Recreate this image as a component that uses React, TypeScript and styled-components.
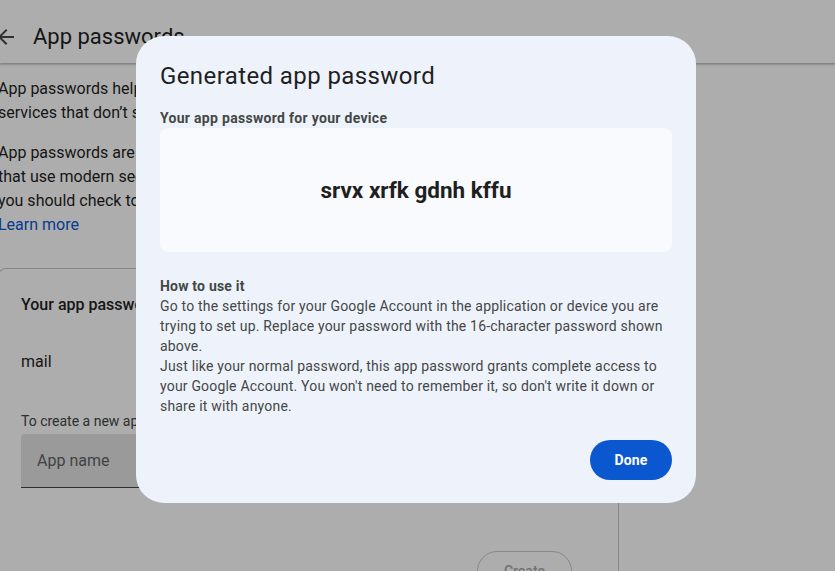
import React from "react";
import styled, { createGlobalStyle } from "styled-components";

const Global = createGlobalStyle`
  html, body { margin: 0; padding: 0; }
  body {
    width: 835px; height: 571px; overflow: hidden;
    background: #ffffff;
    font-family: Roboto, "Liberation Sans", Arial, sans-serif;
    color: #1f1f1f;
  }
`;

const Page = styled.div`
  width: 835px;
  height: 571px;
  display: flex;
  flex-direction: column;
  background: #fff;
  overflow: hidden;
`;

const Header = styled.header`
  height: 63px;
  display: flex;
  align-items: center;
  gap: 19px;
  box-shadow: 0 1px 2px rgba(60, 64, 67, 0.35), 0 1px 3px 1px rgba(60, 64, 67, 0.12);
  background: #fff;
  flex-shrink: 0;
  position: relative;
  z-index: 1;
  padding-top: 10px;
  box-sizing: border-box;
`;

const Title = styled.h1`
  margin: 0;
  font-size: 22px;
  font-weight: 400;
  color: #1f1f1f;
  line-height: 28px;
`;

const Content = styled.main`
  display: flex;
  flex-direction: column;
  flex: 1;
  margin-left: -2px;
  padding-top: 14px;
  width: 621px;
  min-height: 0;
`;

const Para = styled.p`
  margin: 0 0 16px 0;
  font-size: 16px;
  line-height: 24px;
  color: #1f1f1f;
  white-space: nowrap;
`;

const Link = styled.a`
  color: #0b57d0;
  text-decoration: none;
`;

const Card = styled.section`
  margin-top: 15px;
  border: 1px solid #c4c7c5;
  border-bottom: none;
  border-radius: 8px 8px 0 0;
  padding: 24px 20px 0 22px;
  flex: 1;
  min-height: 0;
  display: flex;
  flex-direction: column;
  overflow: hidden;
`;

const CardTitle = styled.div`
  font-size: 16px;
  line-height: 24px;
  font-weight: 500;
  color: #1f1f1f;
`;

const Mail = styled.div`
  font-size: 16px;
  line-height: 24px;
  margin-top: 33px;
`;

const Hint = styled.div`
  font-size: 14px;
  line-height: 20px;
  color: #444746;
  margin-top: 37px;
`;

const Input = styled.div`
  margin-top: 3px;
  height: 53px;
  width: 440px;
  background: #e3e3e3;
  border-bottom: 1px solid #444746;
  border-radius: 4px 4px 0 0;
  display: flex;
  align-items: center;
  padding-left: 16px;
  font-size: 16px;
  color: #5f6368;
  flex-shrink: 0;
`;

const CreateRow = styled.div`
  display: flex;
  justify-content: flex-end;
  margin-top: 63px;
  padding-right: 26px;
`;

const CreateBtn = styled.button`
  height: 40px;
  width: 95px;
  border-radius: 20px;
  border: 1px solid #c7c7c7;
  background: transparent;
  font-family: inherit;
  font-size: 14px;
  font-weight: 500;
  color: #a8a8a8;
  flex-shrink: 0;
`;

const Scrim = styled.div`
  position: fixed;
  inset: 0;
  background: rgba(0, 0, 0, 0.32);
  display: flex;
  justify-content: flex-start;
  align-items: flex-start;
  padding: 36px 0 0 136px;
  z-index: 10;
`;

const Dialog = styled.div`
  width: 560px;
  box-sizing: border-box;
  background: #eef3fb;
  border-radius: 28px;
  padding: 24px 24px 23px 24px;
  display: flex;
  flex-direction: column;
`;

const DialogTitle = styled.h2`
  margin: 0;
  font-size: 24px;
  line-height: 32px;
  font-weight: 400;
  letter-spacing: 0.4px;
  color: #1f1f1f;
`;

const Label = styled.div`
  margin-top: 16px;
  font-size: 14px;
  line-height: 20px;
  font-weight: 700;
  letter-spacing: 0.3px;
  color: #444746;
`;

const PasswordBox = styled.div`
  height: 124px;
  background: #f8fafd;
  border-radius: 8px;
  display: flex;
  align-items: center;
  justify-content: center;
`;

const Password = styled.span`
  font-size: 22.5px;
  font-weight: 700;
  color: #1f1f1f;
`;

const HowTitle = styled.div`
  margin-top: 24px;
  font-size: 14px;
  line-height: 20px;
  font-weight: 700;
  letter-spacing: 0.2px;
  color: #444746;
`;

const Body = styled.div`
  font-size: 14px;
  line-height: 20px;
  letter-spacing: 0.19px;
  color: #444746;
`;

const Actions = styled.div`
  display: flex;
  justify-content: flex-end;
  margin-top: 24px;
`;

const DoneBtn = styled.button`
  height: 40px;
  width: 82px;
  border-radius: 20px;
  border: none;
  background: #0b57d0;
  color: #fff;
  font-family: inherit;
  font-size: 14px;
  font-weight: 700;
  letter-spacing: 0.2px;
`;

export default function App() {
  return (
    <>
      <Global />
      <Page>
        <Header>
          <svg width="16" height="16" viewBox="0 0 16 16" style={{ marginLeft: -2 }}>
            <path d="M16 7H3.8l5.6-5.6L8 0 0 8l8 8 1.4-1.4L3.8 9H16z" fill="#444746" />
          </svg>
          <Title>App passwords</Title>
        </Header>
        <Content>
          <Para>
            App passwords help you sign into your Google Account on older apps and
            <br />
            services that don’t support modern security standards.
          </Para>
          <Para>
            App passwords are less secure than using up-to-date apps and services
            <br />
            that use modern security standards. Before you create an app password,
            <br />
            you should check to see if your app needs this in order to sign in.
            <br />
            <Link>Learn more</Link>
          </Para>
          <Card>
            <CardTitle>Your app passwords</CardTitle>
            <Mail>mail</Mail>
            <Hint>To create a new app specific password, type a name for it below...</Hint>
            <Input>App name</Input>
            <CreateRow>
              <CreateBtn>Create</CreateBtn>
            </CreateRow>
          </Card>
        </Content>
      </Page>
      <Scrim>
        <Dialog>
          <DialogTitle>Generated app password</DialogTitle>
          <Label>Your app password for your device</Label>
          <PasswordBox>
            <Password>srvx xrfk gdnh kffu</Password>
          </PasswordBox>
          <HowTitle>How to use it</HowTitle>
          <Body>
            Go to the settings for your Google Account in the application or device you are
            trying to set up. Replace your password with the 16-character password shown
            above.
            <br />
            Just like your normal password, this app password grants complete access to
            your Google Account. You won't need to remember it, so don't write it down or
            share it with anyone.
          </Body>
          <Actions>
            <DoneBtn>Done</DoneBtn>
          </Actions>
        </Dialog>
      </Scrim>
    </>
  );
}
